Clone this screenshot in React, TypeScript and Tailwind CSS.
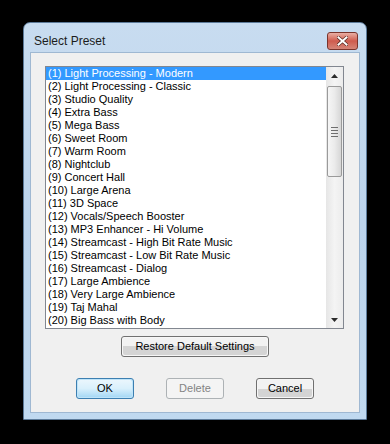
import React from 'react';

const presets = [
  '(1) Light Processing - Modern',
  '(2) Light Processing - Classic',
  '(3) Studio Quality',
  '(4) Extra Bass',
  '(5) Mega Bass',
  '(6) Sweet Room',
  '(7) Warm Room',
  '(8) Nightclub',
  '(9) Concert Hall',
  '(10) Large Arena',
  '(11) 3D Space',
  '(12) Vocals/Speech Booster',
  '(13) MP3 Enhancer - Hi Volume',
  '(14) Streamcast - High Bit Rate Music',
  '(15) Streamcast - Low Bit Rate Music',
  '(16) Streamcast - Dialog',
  '(17) Large Ambience',
  '(18) Very Large Ambience',
  '(19) Taj Mahal',
  '(20) Big Bass with Body',
];

function Scrollbar() {
  return (
    <div className="w-[17px] flex flex-col bg-gradient-to-r from-[#e6e6e6] via-[#f4f4f4] to-[#ececec]">
      {/* up arrow */}
      <div className="h-[17px] flex items-center justify-center">
        <svg width="7" height="4" viewBox="0 0 7 4">
          <path d="M3.5 0 L7 4 L0 4 Z" fill="#2b2b2b" />
        </svg>
      </div>
      {/* thumb */}
      <div className="mt-[2px] mx-[1px] h-[91px] rounded-[2px] border border-[#9a9a9a] bg-gradient-to-r from-[#f6f6f6] via-[#ebebeb] to-[#d6d6d6] flex flex-col items-center justify-center gap-[2px]">
        <div className="w-[7px] h-[1px] bg-[#6e6e6e]" />
        <div className="w-[7px] h-[1px] bg-[#6e6e6e]" />
        <div className="w-[7px] h-[1px] bg-[#6e6e6e]" />
        <div className="w-[7px] h-[1px] bg-[#6e6e6e]" />
      </div>
      <div className="flex-1" />
      {/* down arrow */}
      <div className="h-[17px] flex items-center justify-center">
        <svg width="7" height="4" viewBox="0 0 7 4">
          <path d="M0 0 L7 0 L3.5 4 Z" fill="#2b2b2b" />
        </svg>
      </div>
    </div>
  );
}

function Button({ label, kind, width }: { label: string; kind?: 'default' | 'disabled'; width: string }) {
  if (kind === 'default') {
    return (
      <div className={`${width} h-[21px] rounded-[3px] border border-[#3c7fb1] p-[1px] bg-[#bfe4f9]`}>
        <div className="h-full rounded-[2px] bg-gradient-to-b from-[#eaf6fd] via-[#d9f0fc] to-[#a7d9f5] flex items-center justify-center text-black">
          {label}
        </div>
      </div>
    );
  }
  if (kind === 'disabled') {
    return (
      <div className={`${width} h-[21px] rounded-[3px] border border-[#adb2b5] bg-[#f4f4f4] flex items-center justify-center text-[#838383]`}>
        {label}
      </div>
    );
  }
  return (
    <div className={`${width} h-[21px] rounded-[3px] border border-[#707070] p-[1px] bg-[#f6f6f6]`}>
      <div className="h-full rounded-[2px] bg-gradient-to-b from-[#f2f2f2] from-50% to-[#d4d4d4] to-50% flex items-center justify-center text-black">
        {label}
      </div>
    </div>
  );
}

export default function App() {
  return (
    <div
      className="w-[390px] h-[444px] bg-black pt-[22px] pl-[23px] text-[11px] leading-[13px]"
      style={{ fontFamily: '"Liberation Sans", Arial, sans-serif' }}
    >
      <div className="w-[344px] h-[398px] rounded-t-[7px] border border-[#5c7a99] bg-gradient-to-b from-[#c8dcf0] via-[#bcd4ec] to-[#c0d9f0] flex flex-col">
        {/* title bar */}
        <div className="h-[29px] flex items-center pt-[7px] pl-[10px] pr-[8px]">
          <span className="text-[12px] text-[#1c1c1c] flex-1">Select Preset</span>
          <div className="w-[31px] h-[18px] rounded-[3px] border border-[#7a342c] bg-gradient-to-b from-[#e8aea4] via-[#cf5b4e] to-[#d58578] flex items-center justify-center">
            <svg width="11" height="10" viewBox="0 0 11 10">
              <path d="M1.5 1.5 L9.5 8.5 M9.5 1.5 L1.5 8.5" stroke="#5a2a22" strokeWidth="3.4" strokeLinecap="square" />
              <path d="M1.5 1.5 L9.5 8.5 M9.5 1.5 L1.5 8.5" stroke="#ffffff" strokeWidth="2" strokeLinecap="square" />
            </svg>
          </div>
        </div>
        {/* client area */}
        <div className="flex-1 mx-[6px] mb-[6px] border border-[#9fb8d2] bg-[#f0f0f0] flex flex-col pt-[13px] pb-[13px]">
          {/* list */}
          <div className="ml-[14px] mr-[15px] h-[263px] border border-[#828790] bg-white flex">
            <div className="flex-1">
              {presets.map((p, i) => (
                <div
                  key={p}
                  className={`h-[13px] pl-[2px] whitespace-nowrap ${i === 0 ? 'bg-[#3399ff] text-white' : 'text-black'}`}
                >
                  {p}
                </div>
              ))}
            </div>
            <Scrollbar />
          </div>
          {/* restore */}
          <div className="mt-[7px] flex justify-center">
            <Button label="Restore Default Settings" width="w-[148px]" />
          </div>
          <div className="flex-1" />
          {/* bottom buttons */}
          <div className="flex justify-center gap-[32px]">
            <Button label="OK" kind="default" width="w-[58px]" />
            <Button label="Delete" kind="disabled" width="w-[58px]" />
            <Button label="Cancel" width="w-[58px]" />
          </div>
        </div>
      </div>
    </div>
  );
}
